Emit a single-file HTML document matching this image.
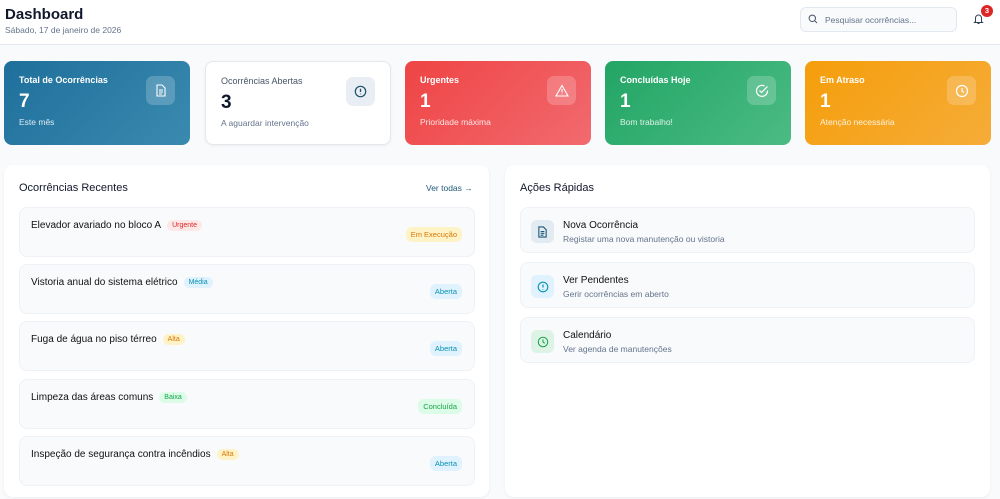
<!DOCTYPE html><html><head><meta charset="utf-8"><style>
*{box-sizing:border-box;margin:0;padding:0}
body{width:1000px;height:499px;overflow:hidden;background:#f8fafc;font-family:"Liberation Sans",sans-serif;position:relative;color:#1e293b}
.a{position:absolute}
.hdr{left:0;top:0;width:1000px;height:45px;background:#fff;border-bottom:1px solid #e2e8f0}
.card{top:61px;width:186px;height:84px;border-radius:8px;color:#fff;padding:14px 15px}
.card .t{font-size:9px;font-weight:bold}
.card .n{font-size:19px;font-weight:bold;margin-top:6px;line-height:22px}
.card .s{font-size:8.5px;margin-top:4px;opacity:.85}
.ic{position:absolute;right:15px;top:15px;width:29px;height:29px;border-radius:7px;background:rgba(255,255,255,.2);display:flex;align-items:center;justify-content:center}
.panel{top:165px;height:332px;background:#fff;border-radius:9px;box-shadow:0 1px 3px rgba(0,0,0,.06)}
.item{left:19px;width:456px;height:50px;background:#f8fafc;border:1px solid #eef2f6;border-radius:8px}
.item .tt{position:absolute;left:11px;top:12px;font-size:10px;color:#111}
.tag{display:inline-block;font-size:7px;padding:2px 5px;border-radius:6px;margin-left:6px;vertical-align:1px}
.st{position:absolute;right:12px;top:19px;font-size:7.5px;padding:3px 5px;border-radius:6px}
.qa{left:520px;width:455px;height:46px;background:#f8fafc;border:1px solid #eef2f6;border-radius:8px}
.qa .q{position:absolute;left:10px;top:12px;width:23px;height:23px;border-radius:6px;display:flex;align-items:center;justify-content:center}
.qa .t1{position:absolute;left:42px;top:12px;font-size:10px;color:#111}
.qa .t2{position:absolute;left:42px;top:26px;font-size:8.5px;color:#64748b}
</style></head><body>
<div class="a hdr"></div>
<div class="a" style="left:5px;top:6px;font-size:15px;font-weight:bold;color:#0f172a">Dashboard</div>
<div class="a" style="left:5px;top:25px;font-size:8.5px;color:#64748b">Sábado, 17 de janeiro de 2026</div>
<div class="a" style="left:800px;top:7px;width:157px;height:25px;border:1px solid #e2e8f0;border-radius:6px;background:#f8fafc"></div>
<svg class="a" style="left:808px;top:14px" width="10" height="10" viewBox="0 0 10 10"><circle cx="4.3" cy="4.3" r="3.2" fill="none" stroke="#475569" stroke-width="1"/><path d="M6.7 6.7 9 9" stroke="#475569" stroke-width="1"/></svg>
<div class="a" style="left:825px;top:15px;font-size:8.5px;color:#64748b">Pesquisar ocorrências...</div>
<svg class="a" style="left:973px;top:13px" width="11" height="12" viewBox="0 0 11 12"><path d="M2.5 8.5V5a3 3 0 0 1 6 0v3.5l1 1h-8z M4.5 10.5h2" fill="none" stroke="#334155" stroke-width="1"/></svg>
<div class="a" style="left:981px;top:5px;width:12px;height:12px;border-radius:6px;background:#dc2626;color:#fff;font-size:7.5px;text-align:center;line-height:12px;font-weight:bold">3</div>

<div class="a card" style="left:4px;background:linear-gradient(135deg,#1e6f9b,#3a8ab0)"><div class="t">Total de Ocorrências</div><div class="n">7</div><div class="s">Este mês</div><div class="ic"><svg width="12" height="13" viewBox="0 0 12 13"><path d="M2 1h5l3 3v8H2z M4 6h4M4 8h4M4 10h3" fill="none" stroke="#fff" stroke-width="1.1"/></svg></div></div>
<div class="a card" style="left:205px;background:#fff;color:#0f172a;border:1px solid #e5e7eb;box-shadow:0 1px 3px rgba(0,0,0,.05)"><div class="t" style="font-weight:normal;color:#475569">Ocorrências Abertas</div><div class="n">3</div><div class="s" style="color:#64748b;opacity:1">A aguardar intervenção</div><div class="ic" style="background:#e8eef3"><svg width="13" height="13" viewBox="0 0 13 13"><circle cx="6.5" cy="6.5" r="5.2" fill="none" stroke="#1e4f6b" stroke-width="1.2"/><path d="M6.5 3.8v3.2M6.5 8.6v.6" stroke="#1e4f6b" stroke-width="1.3"/></svg></div></div>
<div class="a card" style="left:405px;background:linear-gradient(135deg,#ef4444,#f16a6f)"><div class="t">Urgentes</div><div class="n">1</div><div class="s">Prioridade máxima</div><div class="ic"><svg width="14" height="13" viewBox="0 0 14 13"><path d="M7 1.5 13 12H1z M7 5v3.5M7 9.8v.6" fill="none" stroke="#fff" stroke-width="1.1"/></svg></div></div>
<div class="a card" style="left:605px;background:linear-gradient(135deg,#22a565,#4bbb84)"><div class="t">Concluídas Hoje</div><div class="n">1</div><div class="s">Bom trabalho!</div><div class="ic"><svg width="14" height="14" viewBox="0 0 14 14"><path d="M12.5 6.5A5.5 5.5 0 1 1 9.5 2" fill="none" stroke="#fff" stroke-width="1.2"/><path d="M4.5 6.5l2 2 6-6" fill="none" stroke="#fff" stroke-width="1.2"/></svg></div></div>
<div class="a card" style="left:805px;background:linear-gradient(135deg,#f59e0b,#f5ac38)"><div class="t">Em Atraso</div><div class="n">1</div><div class="s">Atenção necessária</div><div class="ic"><svg width="14" height="14" viewBox="0 0 14 14"><circle cx="7" cy="7" r="5.5" fill="none" stroke="#fff" stroke-width="1.2"/><path d="M7 4v3l2 1.5" fill="none" stroke="#fff" stroke-width="1.2"/></svg></div></div>

<div class="a panel" style="left:4px;width:485px"></div>
<div class="a" style="left:19px;top:182px;font-size:11px;color:#0f172a">Ocorrências Recentes</div>
<div class="a" style="left:426px;top:183px;font-size:8.5px;color:#1e5878">Ver todas →</div>
<div class="a item" style="top:207px"><div class="tt">Elevador avariado no bloco A<span class="tag" style="background:#fde8e8;color:#dc2626">Urgente</span></div><div class="st" style="background:#fef3c7;color:#d97706">Em Execução</div></div>
<div class="a item" style="top:264px"><div class="tt">Vistoria anual do sistema elétrico<span class="tag" style="background:#e0f2fe;color:#0891b2">Média</span></div><div class="st" style="background:#e0f2fe;color:#0891b2">Aberta</div></div>
<div class="a item" style="top:321px"><div class="tt">Fuga de água no piso térreo<span class="tag" style="background:#fef3c7;color:#d97706">Alta</span></div><div class="st" style="background:#e0f2fe;color:#0891b2">Aberta</div></div>
<div class="a item" style="top:379px"><div class="tt">Limpeza das áreas comuns<span class="tag" style="background:#dcfce7;color:#16a34a">Baixa</span></div><div class="st" style="background:#dcfce7;color:#16a34a">Concluída</div></div>
<div class="a item" style="top:436px"><div class="tt">Inspeção de segurança contra incêndios<span class="tag" style="background:#fef3c7;color:#d97706">Alta</span></div><div class="st" style="background:#e0f2fe;color:#0891b2">Aberta</div></div>

<div class="a panel" style="left:505px;width:485px"></div>
<div class="a" style="left:520px;top:182px;font-size:11px;color:#0f172a">Ações Rápidas</div>
<div class="a qa" style="top:207px"><div class="q" style="background:#e2ebf1"><svg width="11" height="12" viewBox="0 0 12 13"><path d="M2 1h5l3 3v8H2z M4 6h4M4 8h4M4 10h3" fill="none" stroke="#1e5878" stroke-width="1.2"/></svg></div><div class="t1">Nova Ocorrência</div><div class="t2">Registar uma nova manutenção ou vistoria</div></div>
<div class="a qa" style="top:262px"><div class="q" style="background:#e0f2fe"><svg width="12" height="12" viewBox="0 0 13 13"><circle cx="6.5" cy="6.5" r="5.2" fill="none" stroke="#0891b2" stroke-width="1.2"/><path d="M6.5 3.8v3.2M6.5 8.6v.6" stroke="#0891b2" stroke-width="1.3"/></svg></div><div class="t1">Ver Pendentes</div><div class="t2">Gerir ocorrências em aberto</div></div>
<div class="a qa" style="top:317px"><div class="q" style="background:#dcf3e6"><svg width="12" height="12" viewBox="0 0 14 14"><circle cx="7" cy="7" r="5.5" fill="none" stroke="#16a34a" stroke-width="1.2"/><path d="M7 4v3l2 1.5" fill="none" stroke="#16a34a" stroke-width="1.2"/></svg></div><div class="t1">Calendário</div><div class="t2">Ver agenda de manutenções</div></div>
</body></html>
